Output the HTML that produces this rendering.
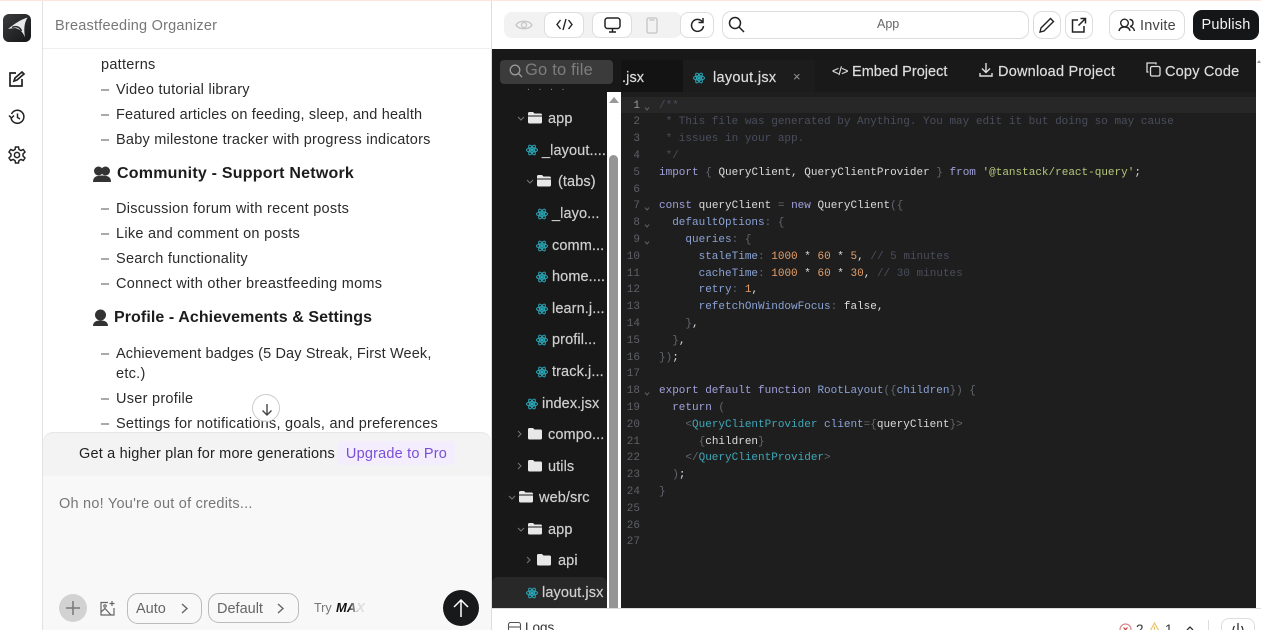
<!DOCTYPE html>
<html><head><meta charset="utf-8"><style>
html,body{margin:0;padding:0;width:1261px;height:630px;overflow:hidden}
body{background:#fff;font-family:"Liberation Sans",sans-serif;color:#222}
#w{position:relative;width:1261px;height:630px;overflow:hidden;background:#fff}
.a{position:absolute;white-space:nowrap}
.li{position:absolute;left:101px;margin-top:1px;font-size:14.5px;letter-spacing:.27px;color:#2b2b2b;white-space:nowrap;line-height:20px}
.li i{font-style:normal;display:inline-block;width:15px;color:#555}
.h{position:absolute;margin-top:1px;font-size:16px;font-weight:bold;color:#1c1c1c;white-space:nowrap;line-height:22px;letter-spacing:.15px}
.btn{position:absolute;box-sizing:border-box;background:#fff;border:1px solid #ddd;border-radius:8px}
.t{position:absolute;margin-top:1px;font-size:14.5px;color:#cfcfcf;white-space:nowrap;line-height:20px;letter-spacing:.1px;-webkit-text-stroke:.2px}
.ln{position:absolute;left:621px;margin-top:1px;width:19px;text-align:right;color:#5e6066;font:11px/16px "Liberation Mono",monospace}
.c{position:absolute;left:659px;margin-top:1px;color:#d4d4d4;font:11px/16px "Liberation Mono",monospace;white-space:pre}
.cm{color:#4a4e5c}.k{color:#a0a0dc}.v{color:#8aa2d6}.n{color:#e59f6b}.s{color:#b5c77b}.w{color:#dcdcdc}.g{color:#62666e}.tg{color:#3fa8b8}
.ch{position:absolute;left:644px;width:6px;height:3px}
svg{position:absolute;overflow:visible}
svg[width="12"][height="12"]{margin-top:1px}
</style></head><body><div id="w">
<div class="a" style="left:0;top:0;width:1261px;height:1px;background:#fbe6de"></div>
<div class="a" style="left:42px;top:1px;width:1px;height:629px;background:#e2e2e2"></div>
<div class="a" style="left:43px;top:48px;width:448px;height:1px;background:#eee"></div>
<div class="a" style="left:491px;top:1px;width:1px;height:629px;background:#ddd"></div>

<div class="a" style="left:3px;top:14px;width:28px;height:28px;border-radius:6px;background:linear-gradient(135deg,#3a3c3d,#141516)"></div>
<svg style="left:3px;top:14px" width="28" height="28" fill="none"><path d="M5 15 C11 10 17 6 24.500 3.500 C20.500 10 21 17 22 23.500 C20 18 17 15 12 14 C10 14 8 14.500 5 15 Z" fill="#e8e8e8"/><path d="M9 13.500 C13 11.500 17 13 18.500 17" stroke="#2a2b2c" stroke-width="1.500"/></svg>
<svg style="left:8px;top:70px" width="18" height="18" fill="none" stroke="#222" stroke-width="1.700"><path d="M8 3H2V16H14V9"/><path d="M6 11L7 8L14 2L16 4L9 10Z"/></svg>
<svg style="left:9px;top:109px" width="16" height="16" fill="none" stroke="#222" stroke-width="1.500"><path d="M2.500 5A6.500 6.500 0 1 1 2 9"/><path d="M0 6.500L2.500 9L5 6.500M8.500 4.500V8.500L11 10"/></svg>
<svg style="left:8px;top:146px" width="18" height="18" fill="none" stroke="#222" stroke-width="1.500"><path d="M7.500 1H10.500L11 3.500L13 4.500L15.300 3.500L17 6L15 8V10L17 12L15.300 14.500L13 13.500L11 14.500L10.500 17H7.500L7 14.500L5 13.500L2.700 14.500L1 12L3 10V8L1 6L2.700 3.500L5 4.500L7 3.500Z"/><circle cx="9" cy="9" r="2.600"/></svg>

<div class="a" style="left:55px;top:16px;font-size:14.500px;letter-spacing:.22px;color:#777;line-height:20px">Breastfeeding Organizer</div>

<div class="li" style="top:54px">patterns</div>
<div class="li" style="top:79px"><i>–</i>Video tutorial library</div>
<div class="li" style="top:104px;letter-spacing:.17px"><i>–</i>Featured articles on feeding, sleep, and health</div>
<div class="li" style="top:129px;letter-spacing:.23px"><i>–</i>Baby milestone tracker with progress indicators</div>
<svg style="left:93px;top:166px" width="18" height="16" fill="#333"><circle cx="5.500" cy="5" r="4.500"/><circle cx="12.500" cy="5" r="4.500"/><path d="M0 16C0 11 3 9.500 9 9.500S18 11 18 16Z"/></svg>
<div class="h" style="left:117px;top:162px;letter-spacing:.22px">Community - Support Network</div>
<div class="li" style="top:198px"><i>–</i>Discussion forum with recent posts</div>
<div class="li" style="top:223px"><i>–</i>Like and comment on posts</div>
<div class="li" style="top:248px"><i>–</i>Search functionality</div>
<div class="li" style="top:273px"><i>–</i>Connect with other breastfeeding moms</div>
<svg style="left:93px;top:309px" width="15" height="17" fill="#333"><circle cx="7.500" cy="6" r="5.500"/><path d="M0 17C0 13 3 11.500 7.500 11.500S15 13 15 17Z"/></svg>
<div class="h" style="left:114px;top:306px;letter-spacing:.08px">Profile - Achievements &amp; Settings</div>
<div class="li" style="top:343px;letter-spacing:.14px"><i>–</i>Achievement badges (5 Day Streak, First Week,</div>
<div class="li" style="top:363px;left:116px">etc.)</div>
<div class="li" style="top:388px"><i>–</i>User profile</div>
<div class="li" style="top:413px;letter-spacing:.25px"><i>–</i>Settings for notifications, goals, and preferences</div>
<div class="a" style="left:252px;top:394px;width:28px;height:28px;box-sizing:border-box;border:1px solid #ccc;border-radius:50%;background:rgba(255,255,255,.85)"></div>
<svg style="left:261px;top:403px" width="12" height="13" fill="none" stroke="#444" stroke-width="1.400"><path d="M6 1V12M1.500 7.500L6 12L10.500 7.500"/></svg>

<div class="a" style="left:43px;top:432px;width:448px;height:198px;background:#f8f8f8;border-radius:10px 10px 0 0"></div>
<div class="a" style="left:43px;top:432px;width:448px;height:44px;background:#f3f3f3;border-radius:10px 10px 0 0;box-shadow:inset 0 1px 0 #e6e6e6"></div>
<div class="a" style="left:79px;top:444px;font-size:14.500px;letter-spacing:.18px;color:#222;line-height:20px">Get a higher plan for more generations</div>
<div class="a" style="left:338px;top:441px;width:117px;height:24px;background:#f3edfd;border-radius:4px;color:#7a4fd6;font-size:14.500px;line-height:26px;text-align:center;letter-spacing:.2px">Upgrade to Pro</div>
<div class="a" style="left:59px;top:494px;font-size:14.500px;letter-spacing:.23px;color:#777;line-height:20px">Oh no! You're out of credits...</div>

<div class="a" style="left:59px;top:594px;width:28px;height:28px;border-radius:50%;background:#d2d2d2"></div>
<svg style="left:66px;top:601px" width="14" height="14" stroke="#777" stroke-width="1.500"><path d="M7 0V14M0 7H14"/></svg>
<svg style="left:100px;top:601px" width="15" height="15" fill="none" stroke="#666" stroke-width="1.200"><path d="M8 1.500H1V14H14V7"/><path d="M1 11L5 7.500L11 14"/><circle cx="5" cy="5" r="1.200"/><path d="M12 0V5M9.500 2.500H14.500"/></svg>
<div class="btn" style="left:127px;top:593px;width:75px;height:31px;border-color:#bbb;border-radius:11px;background:transparent"></div>
<div class="a" style="left:136px;top:599px;font-size:14.500px;color:#666;line-height:20px">Auto</div>
<svg style="left:180px;top:602px" width="9" height="13" fill="none" stroke="#666" stroke-width="1.400"><path d="M2 2L7 6.500L2 11"/></svg>
<div class="btn" style="left:208px;top:593px;width:91px;height:30px;border-color:#bbb;border-radius:11px;background:transparent"></div>
<div class="a" style="left:217px;top:599px;font-size:14.500px;color:#666;line-height:20px">Default</div>
<svg style="left:276px;top:602px" width="9" height="13" fill="none" stroke="#666" stroke-width="1.400"><path d="M2 2L7 6.500L2 11"/></svg>
<div class="a" style="left:314px;top:600px;font-size:12.500px;color:#777;line-height:16px">Try</div>
<div class="a" style="left:336px;top:600px;font-size:13px;font-weight:bold;font-style:italic;line-height:16px;width:30px;overflow:hidden;background:linear-gradient(90deg,#111 0,#111 40%,#ddd 75%);-webkit-background-clip:text;background-clip:text;color:transparent">MAX</div>
<div class="a" style="left:443px;top:590px;width:36px;height:36px;border-radius:50%;background:#17191a"></div>
<svg style="left:453px;top:599px" width="16" height="18" fill="none" stroke="#fff" stroke-width="1.500"><path d="M8 18V1M1 8L8 1L15 8"/></svg>

<!-- toolbar -->
<div class="a" style="left:504px;top:12px;width:178px;height:26px;background:#f2f2f2;border-radius:8px"></div>
<svg style="left:515px;top:18px" width="18" height="14" fill="none" stroke="#c6c6c6" stroke-width="1.300"><path d="M1 7C4 2 14 2 17 7C14 12 4 12 1 7Z"/><circle cx="9" cy="7" r="2.500"/></svg>
<div class="btn" style="left:544px;top:12px;width:40px;height:26px;border-radius:8px"></div>
<svg style="left:556px;top:18px" width="17" height="13" fill="none" stroke="#222" stroke-width="1.400"><path d="M4.500 2L1 6.500L4.500 11M12.500 2L16 6.500L12.500 11M10 1L7 12"/></svg>
<div class="btn" style="left:592px;top:12px;width:40px;height:26px;border-radius:8px"></div>
<svg style="left:604px;top:17px" width="17" height="16" fill="none" stroke="#222" stroke-width="1.500"><rect x="1" y="1" width="15" height="10.500" rx="2.500"/><path d="M8.500 11.500V14.500M5 15H12"/></svg>
<svg style="left:646px;top:17px" width="12" height="17" fill="none" stroke="#c4c4c4" stroke-width="1.300"><rect x="1" y="1" width="10" height="15" rx="1.500"/><path d="M3.500 3H8.500"/></svg>
<div class="btn" style="left:680px;top:12px;width:34px;height:26px;border-radius:8px"></div>
<svg style="left:689px;top:17px" width="16" height="16" fill="none" stroke="#222" stroke-width="1.500"><path d="M13.500 5A6 6 0 1 0 14.500 9"/><path d="M14 1V5.500H9.500"/></svg>
<div class="btn" style="left:722px;top:11px;width:307px;height:28px;border-radius:9px"></div>
<svg style="left:728px;top:16px" width="17" height="17" fill="none" stroke="#222" stroke-width="1.500"><circle cx="7" cy="7" r="5.500"/><path d="M11 11L16 16"/></svg>
<div class="a" style="left:877px;top:16px;font-size:12.500px;color:#666;line-height:16px">App</div>
<div class="btn" style="left:1033px;top:11px;width:28px;height:28px;border-radius:9px"></div>
<svg style="left:1039px;top:17px" width="16" height="16" fill="none" stroke="#222" stroke-width="1.400"><path d="M1 15L2 11L11.500 1.500L14.500 4.500L5 14Z"/></svg>
<div class="btn" style="left:1065px;top:11px;width:28px;height:28px;border-radius:9px"></div>
<svg style="left:1071px;top:17px" width="16" height="16" fill="none" stroke="#222" stroke-width="1.500"><path d="M7 3H1.500V15H13V9M9.500 1.500H14.500V6.500M14.500 1.500L7.500 8.500"/></svg>
<div class="btn" style="left:1109px;top:10px;width:76px;height:30px;border-radius:9px"></div>
<svg style="left:1118px;top:18px" width="18" height="14" fill="none" stroke="#222" stroke-width="1.400"><circle cx="6.500" cy="5" r="3.800"/><path d="M1 13C1.500 10 4 9 6.500 9S11.500 10 12 13M11.500 1.500C14 1.500 15 3 15 5S14 8 12 8.500C14.500 9 16 10.500 16.500 13"/></svg>
<div class="a" style="left:1140px;top:16px;font-size:14.500px;color:#444;line-height:20px;letter-spacing:.2px">Invite</div>
<div class="a" style="left:1193px;top:10px;width:66px;height:30px;border-radius:9px;background:#151617;color:#f4f4f4;font-size:14.500px;line-height:31px;text-align:center;letter-spacing:.2px">Publish</div>

<!-- editor -->
<div class="a" style="left:492px;top:49px;width:764px;height:559px;background:#181818"></div>
<div class="a" style="left:1256px;top:49px;width:5px;height:559px;background:#fff"></div>
<div class="a" style="left:1257px;top:58px;width:0;height:0;border:2px solid transparent;border-bottom:3px solid #999"></div>
<div class="a" style="left:621px;top:60px;width:62px;height:32px;background:#131313"></div>
<div class="a" style="left:683px;top:60px;width:132px;height:32px;background:#1c1c1c"></div>
<div class="a" style="left:815px;top:60px;width:441px;height:32px;background:#191919"></div>
<div class="a" style="left:621px;top:92px;width:635px;height:516px;background:#1e1e1e"></div>
<div class="a" style="left:621px;top:97px;width:635px;height:16px;background:#272727"></div>
<div class="a" style="left:607px;top:92px;width:14px;height:516px;background:#fff"></div>
<div class="a" style="left:609px;top:155px;width:9px;height:453px;background:#959595;border-radius:5px 5px 0 0"></div>
<div class="a" style="left:609px;top:97px;width:0;height:0;border:5px solid transparent;border-top:0;border-bottom:6px solid #999"></div>
<div class="a" style="left:500px;top:60px;width:113px;height:24px;background:#3b3b3b;border-radius:4px"></div>
<svg style="left:509px;top:64px" width="14" height="14" fill="none" stroke="#999" stroke-width="1.300"><circle cx="6" cy="6" r="4.800"/><path d="M9.500 9.500L13 13"/></svg>
<div class="a" style="left:525px;top:60px;font-size:16.500px;color:#7d7d7d;line-height:21px;letter-spacing:.2px">Go to file</div>

<div class="t" style="left:622px;top:67px;color:#ddd">.jsx</div>
<div class="t" style="left:713px;top:67px;color:#ddd;letter-spacing:.3px">layout.jsx</div>
<div class="a" style="left:793px;top:70px;font-size:13px;line-height:14px;color:#999">×</div>
<div class="t" style="left:832px;top:60px;color:#ddd;font-size:12px;letter-spacing:-.5px">&lt;/&gt;</div>
<div class="t" style="left:852px;top:61px;color:#ddd;letter-spacing:.03px">Embed Project</div>
<svg style="left:979px;top:63px" width="14" height="14" fill="none" stroke="#ddd" stroke-width="1.400"><path d="M7 0V9M3 5.500L7 9.500L11 5.500M1 10V13H13V10"/></svg>
<div class="t" style="left:998px;top:61px;color:#ddd;letter-spacing:.22px">Download Project</div>
<svg style="left:1146px;top:62px" width="15" height="15" fill="none" stroke="#ddd" stroke-width="1.300"><rect x="4.500" y="4.500" width="9.500" height="9.500" rx="1.500"/><path d="M2.500 10H1V1H10V2.500"/></svg>
<div class="t" style="left:1165px;top:61px;color:#ddd;letter-spacing:.2px">Copy Code</div>

<!-- tree -->
<svg width="0" height="0"><defs>
<g id="r" fill="none" stroke="#2aa5b5" stroke-width="1"><ellipse cx="6" cy="6" rx="5.500" ry="2.200"/><ellipse cx="6" cy="6" rx="5.500" ry="2.200" transform="rotate(60 6 6)"/><ellipse cx="6" cy="6" rx="5.500" ry="2.200" transform="rotate(120 6 6)"/><circle cx="6" cy="6" r="1" fill="#2aa5b5"/></g>
<g id="fo" fill="#e8e8e8"><path d="M0 2.500Q0 1 1.500 1H5L6.500 2.500H12.500Q14 2.500 14 4V4.500H0Z"/><path d="M0 5.500H14V11Q14 12.500 12.500 12.500H1.500Q0 12.500 0 11Z"/></g>
<g id="fc" fill="#e8e8e8"><path d="M0 2.500Q0 1 1.500 1H5L6.500 2.500H12.500Q14 2.500 14 4V11Q14 12.500 12.500 12.500H1.500Q0 12.500 0 11Z"/></g>
</defs></svg>
<div class="a" style="left:527px;top:84px;width:40px;font-size:10px;line-height:8px;color:#888;letter-spacing:3px">. . . .</div>
<div class="a" style="left:492px;top:577px;width:115px;height:31px;background:#282828;border-radius:6px 6px 0 0"></div>

<svg style="left:517px;top:116px" width="8" height="5" fill="none" stroke="#777"><path d="M1 1L4 4L7 1"/></svg>
<svg style="left:528px;top:111px" width="14" height="14"><use href="#fo"/></svg><div class="t" style="left:548px;top:108px">app</div>
<svg style="left:526px;top:143px" width="12" height="12"><use href="#r"/></svg><div class="t" style="left:542px;top:140px">_layout....</div>
<svg style="left:526px;top:179px" width="8" height="5" fill="none" stroke="#777"><path d="M1 1L4 4L7 1"/></svg>
<svg style="left:537px;top:174px" width="14" height="14"><use href="#fo"/></svg><div class="t" style="left:558px;top:171px">(tabs)</div>
<svg style="left:536px;top:207px" width="12" height="12"><use href="#r"/></svg><div class="t" style="left:552px;top:203px">_layo...</div>
<svg style="left:536px;top:239px" width="12" height="12"><use href="#r"/></svg><div class="t" style="left:552px;top:235px">comm...</div>
<svg style="left:536px;top:270px" width="12" height="12"><use href="#r"/></svg><div class="t" style="left:552px;top:266px">home....</div>
<svg style="left:536px;top:302px" width="12" height="12"><use href="#r"/></svg><div class="t" style="left:552px;top:298px">learn.j...</div>
<svg style="left:536px;top:333px" width="12" height="12"><use href="#r"/></svg><div class="t" style="left:552px;top:329px">profil...</div>
<svg style="left:536px;top:365px" width="12" height="12"><use href="#r"/></svg><div class="t" style="left:552px;top:361px">track.j...</div>
<svg style="left:526px;top:397px" width="12" height="12"><use href="#r"/></svg><div class="t" style="left:542px;top:393px">index.jsx</div>
<svg style="left:517px;top:430px" width="5" height="8" fill="none" stroke="#777"><path d="M1 1L4 4L1 7"/></svg>
<svg style="left:528px;top:427px" width="14" height="14"><use href="#fc"/></svg><div class="t" style="left:548px;top:424px">compo...</div>
<svg style="left:517px;top:462px" width="5" height="8" fill="none" stroke="#777"><path d="M1 1L4 4L1 7"/></svg>
<svg style="left:528px;top:459px" width="14" height="14"><use href="#fc"/></svg><div class="t" style="left:548px;top:456px">utils</div>
<svg style="left:508px;top:495px" width="8" height="5" fill="none" stroke="#777"><path d="M1 1L4 4L7 1"/></svg>
<svg style="left:519px;top:490px" width="14" height="14"><use href="#fo"/></svg><div class="t" style="left:539px;top:487px">web/src</div>
<svg style="left:517px;top:527px" width="8" height="5" fill="none" stroke="#777"><path d="M1 1L4 4L7 1"/></svg>
<svg style="left:528px;top:522px" width="14" height="14"><use href="#fo"/></svg><div class="t" style="left:548px;top:519px">app</div>
<svg style="left:526px;top:556px" width="5" height="8" fill="none" stroke="#777"><path d="M1 1L4 4L1 7"/></svg>
<svg style="left:537px;top:553px" width="14" height="14"><use href="#fc"/></svg><div class="t" style="left:558px;top:550px">api</div>
<svg style="left:526px;top:586px" width="12" height="12"><use href="#r"/></svg><div class="t" style="left:542px;top:582px">layout.jsx</div>
<svg style="left:693px;top:71px" width="12" height="12"><use href="#r"/></svg>

<!-- code -->
<div class="ln" style="top:97px;color:#9a9a9a">1</div><div class="c cm" style="top:97px">/**</div>
<div class="ln" style="top:113px">2</div><div class="c cm" style="top:113px"> * This file was generated by Anything. You may edit it but doing so may cause</div>
<div class="ln" style="top:130px">3</div><div class="c cm" style="top:130px"> * issues in your app.</div>
<div class="ln" style="top:147px">4</div><div class="c cm" style="top:147px"> */</div>
<div class="ln" style="top:164px">5</div><div class="c" style="top:164px"><span class="k">import</span> <span class="g">{</span> <span class="w">QueryClient, QueryClientProvider</span> <span class="g">}</span> <span class="k">from</span> <span class="s">'@tanstack/react-query'</span><span class="w">;</span></div>
<div class="ln" style="top:181px">6</div>
<div class="ln" style="top:197px">7</div><div class="c" style="top:197px"><span class="k">const</span> <span class="w">queryClient</span> <span class="g">=</span> <span class="k">new</span> <span class="w">QueryClient</span><span class="g">({</span></div>
<div class="ln" style="top:214px">8</div><div class="c" style="top:214px">  <span class="v">defaultOptions</span><span class="g">: {</span></div>
<div class="ln" style="top:231px">9</div><div class="c" style="top:231px">    <span class="v">queries</span><span class="g">: {</span></div>
<div class="ln" style="top:248px">10</div><div class="c" style="top:248px">      <span class="v">staleTime</span><span class="g">:</span> <span class="n">1000</span> <span class="w">*</span> <span class="n">60</span> <span class="w">*</span> <span class="n">5</span><span class="w">,</span> <span class="cm">// 5 minutes</span></div>
<div class="ln" style="top:265px">11</div><div class="c" style="top:265px">      <span class="v">cacheTime</span><span class="g">:</span> <span class="n">1000</span> <span class="w">*</span> <span class="n">60</span> <span class="w">*</span> <span class="n">30</span><span class="w">,</span> <span class="cm">// 30 minutes</span></div>
<div class="ln" style="top:281px">12</div><div class="c" style="top:281px">      <span class="v">retry</span><span class="g">:</span> <span class="n">1</span><span class="w">,</span></div>
<div class="ln" style="top:298px">13</div><div class="c" style="top:298px">      <span class="v">refetchOnWindowFocus</span><span class="g">:</span> <span class="w">false,</span></div>
<div class="ln" style="top:315px">14</div><div class="c" style="top:315px">    <span class="g">}</span><span class="w">,</span></div>
<div class="ln" style="top:332px">15</div><div class="c" style="top:332px">  <span class="g">}</span><span class="w">,</span></div>
<div class="ln" style="top:349px">16</div><div class="c" style="top:349px"><span class="g">})</span><span class="w">;</span></div>
<div class="ln" style="top:365px">17</div>
<div class="ln" style="top:382px">18</div><div class="c" style="top:382px"><span class="k">export default function</span> <span class="v">RootLayout</span><span class="g">({</span><span class="v">children</span><span class="g">}) {</span></div>
<div class="ln" style="top:399px">19</div><div class="c" style="top:399px">  <span class="k">return</span> <span class="g">(</span></div>
<div class="ln" style="top:416px">20</div><div class="c" style="top:416px">    <span class="g">&lt;</span><span class="tg">QueryClientProvider</span> <span class="v">client</span><span class="g">={</span><span class="w">queryClient</span><span class="g">}&gt;</span></div>
<div class="ln" style="top:433px">21</div><div class="c" style="top:433px">      <span class="g">{</span><span class="w">children</span><span class="g">}</span></div>
<div class="ln" style="top:449px">22</div><div class="c" style="top:449px">    <span class="g">&lt;/</span><span class="tg">QueryClientProvider</span><span class="g">&gt;</span></div>
<div class="ln" style="top:466px">23</div><div class="c" style="top:466px">  <span class="g">)</span><span class="w">;</span></div>
<div class="ln" style="top:483px">24</div><div class="c" style="top:483px"><span class="g">}</span></div>
<div class="ln" style="top:500px">25</div>
<div class="ln" style="top:517px">26</div>
<div class="ln" style="top:533px">27</div>

<svg class="ch" style="top:107px" width="6" height="4" fill="none" stroke="#666"><path d="M1 0.500L3 3L5 0.500"/></svg>
<svg class="ch" style="top:207px" width="6" height="4" fill="none" stroke="#666"><path d="M1 0.500L3 3L5 0.500"/></svg>
<svg class="ch" style="top:224px" width="6" height="4" fill="none" stroke="#666"><path d="M1 0.500L3 3L5 0.500"/></svg>
<svg class="ch" style="top:241px" width="6" height="4" fill="none" stroke="#666"><path d="M1 0.500L3 3L5 0.500"/></svg>
<svg class="ch" style="top:392px" width="6" height="4" fill="none" stroke="#666"><path d="M1 0.500L3 3L5 0.500"/></svg>

<!-- footer -->
<div class="a" style="left:492px;top:608px;width:769px;height:1px;background:#ddd"></div>
<svg style="left:508px;top:622px" width="13" height="12" fill="none" stroke="#555" stroke-width="1.100"><rect x="0.500" y="0.500" width="12" height="11" rx="2"/><path d="M0.500 5H12.500"/></svg>
<div class="a" style="left:525px;top:620px;font-size:13.500px;color:#333;line-height:16px">Logs</div>
<svg style="left:1119px;top:623px" width="13" height="13" fill="none" stroke="#d98a8a" stroke-width="1.200"><circle cx="6.500" cy="6.500" r="5.500"/><path d="M4.500 4.500L8.500 8.500M8.500 4.500L4.500 8.500" stroke="#c44"/></svg>
<div class="a" style="left:1136px;top:622px;font-size:13.500px;color:#333;line-height:16px">2</div>
<svg style="left:1148px;top:622px" width="13" height="12" fill="none" stroke="#e8c56a" stroke-width="1.200"><path d="M6.500 1L12.500 12H0.500ZM6.500 4.500V8"/></svg>
<div class="a" style="left:1165px;top:622px;font-size:13.500px;color:#333;line-height:16px">1</div>
<svg style="left:1186px;top:625px" width="8" height="6" fill="none" stroke="#333" stroke-width="1.300"><path d="M1 5L4 2L7 5"/></svg>
<div class="a" style="left:1208px;top:620px;width:1px;height:10px;background:#ddd"></div>
<div class="btn" style="left:1221px;top:618px;width:34px;height:30px;border-radius:8px"></div>
<svg style="left:1232px;top:623px" width="12" height="8" fill="none" stroke="#333" stroke-width="1.300"><path d="M6 0V8M2.500 3C1 5 1 7 1 8M9.500 3C11 5 11 7 11 8"/></svg>
</div></body></html>
